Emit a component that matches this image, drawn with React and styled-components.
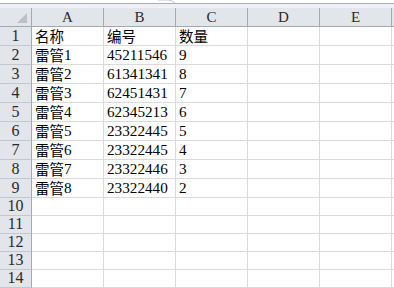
import React from "react"
import styled, { createGlobalStyle } from "styled-components"

const GlobalStyle = createGlobalStyle`
  html, body {
    margin: 0;
    padding: 0;
    background: #ffffff;
    overflow: hidden;
  }
`

const Window = styled.div`
  width: 394px;
  height: 288px;
  overflow: hidden;
  background: #ffffff;
  display: flex;
  flex-direction: column;
`

const FormulaEdge = styled.div`
  height: 3px;
  background: #ffffff;
  display: flex;
  svg {
    margin-left: 158px;
  }
`

const Splitter = styled.div`
  height: 4px;
  border-top: 1px solid #a9adb3;
  background: #eef0f3;
`

const Sheet = styled.div`
  display: grid;
  grid-template-columns: 32px repeat(5, 72px) 1fr;
  grid-template-rows: 19px repeat(9, 19px) repeat(5, 18px);
`

const Corner = styled.div`
  position: relative;
  background: #e2e5ea;
  border-right: 1px solid #a4a9b0;
  border-bottom: 1px solid #a4a9b0;
  &::after {
    content: "";
    position: absolute;
    right: 4px;
    bottom: 3px;
    width: 0;
    height: 0;
    border-left: 10px solid transparent;
    border-bottom: 10px solid #bcc0c6;
  }
`

const ColHead = styled.div`
  background: #e2e5ea;
  border-right: 1px solid ${({ $last }) => ($last ? "#c9cdd2" : "#a4a9b0")};
  border-bottom: 1px solid #a4a9b0;
  display: flex;
  align-items: center;
  justify-content: center;
  padding-top: 1px;
  font-family: "Liberation Serif", "DejaVu Serif", serif;
  font-size: 15px;
  color: #2a2a2a;
`

const RowHead = styled.div`
  background: #e2e5ea;
  border-right: 1px solid #a4a9b0;
  border-bottom: 1px solid #c4c8ce;
  display: flex;
  align-items: flex-end;
  justify-content: center;
  padding-bottom: 1px;
  font-family: "Liberation Serif", "DejaVu Serif", serif;
  font-size: 16px;
  line-height: 16px;
  color: #2a2a2a;
`

const Cell = styled.div`
  border-right: 1px solid ${({ $last }) => ($last ? "#e6e6e6" : "#dadada")};
  border-bottom: 1px solid #dadada;
  display: flex;
  align-items: flex-end;
  padding: 0 0 1px 3px;
  white-space: nowrap;
  font-family: "Noto Sans CJK SC", sans-serif;
  font-size: 14.5px;
  line-height: 17px;
  color: #000000;
`

// half-width digits sit on the song-style grid: 0.5em each
const Ascii = styled.span`
  font-family: "Liberation Serif", serif;
  font-size: 15.2px;
`

const columns = ["A", "B", "C", "D", "E", ""]

const data = [
  ["名称", "编号", "数量"],
  ["雷管1", "45211546", "9"],
  ["雷管2", "61341341", "8"],
  ["雷管3", "62451431", "7"],
  ["雷管4", "62345213", "6"],
  ["雷管5", "23322445", "5"],
  ["雷管6", "23322445", "4"],
  ["雷管7", "23322446", "3"],
  ["雷管8", "23322440", "2"],
]

const ROWS = 14

const CellText = ({ text }) => {
  const runs = text.match(/[\x20-\x7e]+|[^\x20-\x7e]+/g) || []
  return runs.map((run, i) =>
    /^[\x20-\x7e]+$/.test(run) ? <Ascii key={i}>{run}</Ascii> : <span key={i}>{run}</span>
  )
}

const App = () => {
  return (
    <Window>
      <GlobalStyle />
      <FormulaEdge>
        <svg width="18" height="3" viewBox="0 0 18 3">
          <path d="M0 0 L10 0 Q14 0 17 3" fill="none" stroke="#c4c7cc" strokeWidth="1" />
        </svg>
      </FormulaEdge>
      <Splitter />
      <Sheet>
        <Corner />
        {columns.map((c, i) => (
          <ColHead key={"h" + i} $last={i === columns.length - 1}>
            {c}
          </ColHead>
        ))}
        {Array.from({ length: ROWS }).map((_, r) => (
          <React.Fragment key={r}>
            <RowHead>{r + 1}</RowHead>
            {columns.map((_, c) => (
              <Cell key={c} $last={c === columns.length - 1}>
                <CellText text={(data[r] && data[r][c]) || ""} />
              </Cell>
            ))}
          </React.Fragment>
        ))}
      </Sheet>
    </Window>
  )
}

export default App
